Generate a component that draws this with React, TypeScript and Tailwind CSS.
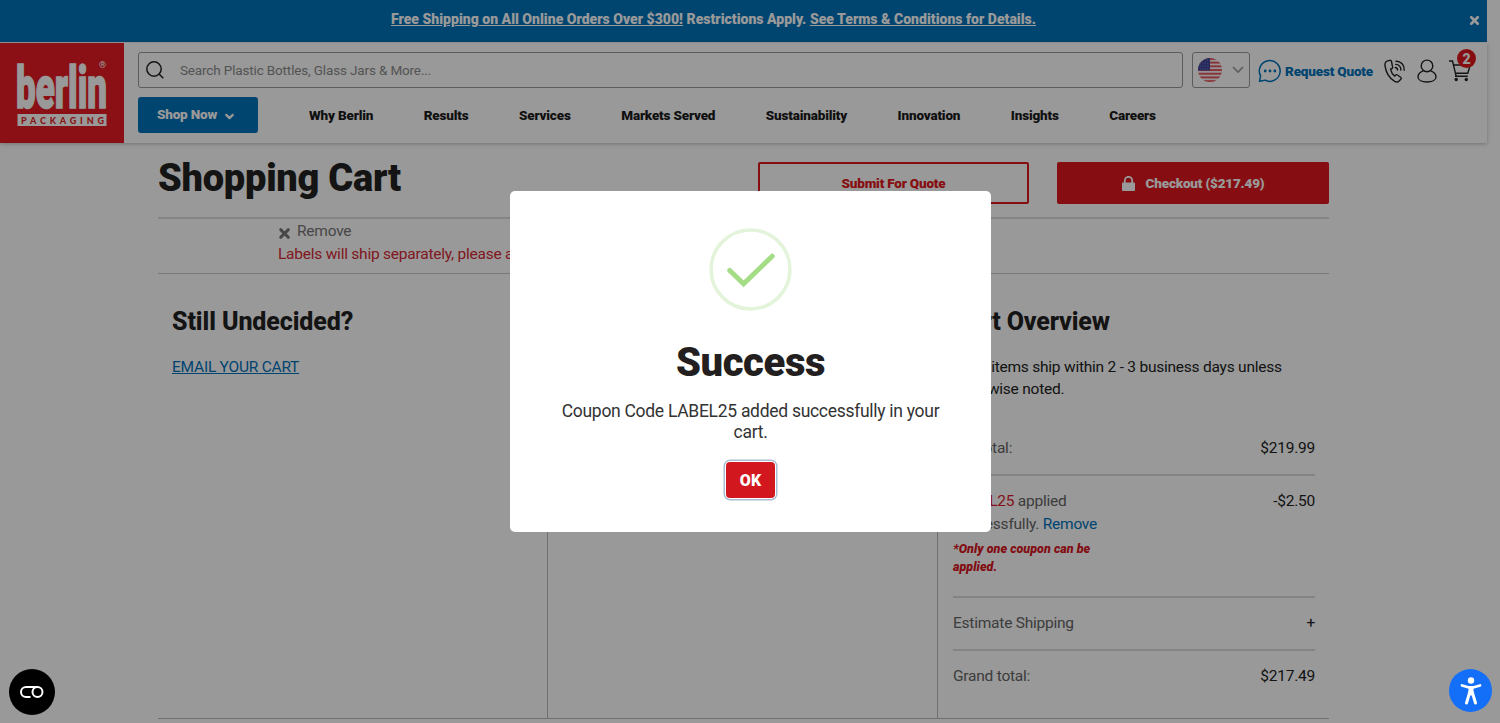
import { X, ChevronDown } from "lucide-react";

const navItems = [
  "Why Berlin",
  "Results",
  "Services",
  "Markets Served",
  "Sustainability",
  "Innovation",
  "Insights",
  "Careers",
];

function Logo() {
  return (
    <svg width="124" height="100" viewBox="0 0 124 100" className="shrink-0 overflow-visible bg-[#e61c24]">
      <text
        x="16"
        y="64.5"
        textLength="91"
        lengthAdjust="spacingAndGlyphs"
        fontFamily="Roboto, sans-serif"
        fontWeight="900"
        fontSize="60"
        fill="#fff"
        stroke="#fff"
        strokeWidth="1.5"
      >
        berlin
      </text>
      <text x="99" y="25" fontFamily="Roboto, sans-serif" fontSize="9" fill="#fff">
        ®
      </text>
      <rect x="17.5" y="71" width="89" height="12" fill="#fff" />
      <text
        x="21"
        y="80.5"
        textLength="83"
        fontFamily="Lato, sans-serif"
        fontWeight="900"
        fontSize="9"
        fill="#e61c24"
      >
        PACKAGING
      </text>
    </svg>
  );
}

function SearchIcon() {
  return (
    <svg width="18" height="18" viewBox="0 0 18 18" fill="none" stroke="#222" strokeWidth="1.5">
      <circle cx="8" cy="8" r="7.2" />
      <path d="M13 13l4.3 4.3" />
    </svg>
  );
}

function FlagIcon() {
  return (
    <svg width="24" height="24" viewBox="0 0 24 24">
      <clipPath id="flag">
        <circle cx="12" cy="12" r="12" />
      </clipPath>
      <g clipPath="url(#flag)">
        <rect width="24" height="24" fill="#f4f4f4" />
        {[0, 1, 2, 3, 4, 5, 6].map((i) => (
          <rect key={i} y={i * 3.7} width="24" height="1.85" fill="#e8505a" />
        ))}
        <rect width="12" height="12.5" fill="#41479b" />
        {[2, 5, 8, 11].map((y) => (
          <path key={y} d={`M2 ${y}h9`} stroke="#8c90c8" strokeWidth="0.8" strokeDasharray="1 1.4" />
        ))}
      </g>
    </svg>
  );
}

function ChatIcon() {
  return (
    <svg width="24" height="24" viewBox="0 0 24 24" fill="none" stroke="#0072bb" strokeWidth="1.5">
      <path d="M1.5 22.3l1.1-5.4A10.4 10.4 0 1 1 7 21.2z" strokeLinejoin="round" />
      <g fill="#0072bb" stroke="none">
        <circle cx="7.2" cy="12" r="1.4" />
        <circle cx="12" cy="12" r="1.4" />
        <circle cx="16.8" cy="12" r="1.4" />
      </g>
    </svg>
  );
}

function PhoneIcon() {
  return (
    <svg width="22" height="24" viewBox="0 0 22 24" fill="none" stroke="#222" strokeWidth="1.4" strokeLinecap="round" strokeLinejoin="round">
      <path d="M5.8 1.3L2.9 2.1C1.2 2.7.8 4.6 1 6.6c.8 6.7 4.3 12.5 9.7 15.700 1.600.9 3.200.9 4.400-.3l1.700-1.800c.6-.7.5-1.500-.2-2l-3.100-2.200c-.7-.5-1.500-.4-2 .2l-.8.9c-2.100-1.500-3.600-4.100-4.200-6.900l1.200-.5c.7-.3 1-.9.9-1.600L7.500 2.500c-.2-.8-.9-1.400-1.700-1.200z" />
      <path d="M12 2.200a8 8 0 0 1 8.200 9M11.800 5.400a5 5 0 0 1 5 5.700M11.300 8.500a2.400 2.400 0 0 1 2.200 2.500" />
    </svg>
  );
}

function UserIcon() {
  return (
    <svg width="20" height="24" viewBox="0 0 20 24" fill="none" stroke="#222" strokeWidth="1.4">
      <circle cx="10" cy="6.9" r="5.8" />
      <path d="M6.3 11.8C3 12.900 1 15.400 1 18c0 3.200 4 5 9 5s9-1.800 9-5c0-2.600-2-5.100-5.300-6.200" />
    </svg>
  );
}

function CartIcon() {
  return (
    <svg width="24" height="24" viewBox="0 0 24 24" fill="none" stroke="#222" strokeWidth="1.4">
      <path d="M1 2h3.500l3.700 15.300M5.400 6h16.800l-2.400 8.300H7.500M7 17.300h12.800" />
      <circle cx="8.2" cy="20.5" r="1.7" fill="#222" stroke="none" />
      <circle cx="18.3" cy="20.5" r="1.7" fill="#222" stroke="none" />
    </svg>
  );
}

function Header() {
  return (
    <header>
      <div className="flex h-[42px] items-center bg-[#0072bb] pr-[6px] pb-[3px] pl-[391px] text-sm font-black tracking-[0.02px] text-white">
        <p className="-mt-px whitespace-nowrap">
          <span className="underline">Free Shipping on All Online Orders Over $300!</span> Restrictions Apply.{" "}
          <span className="underline">See Terms &amp; Conditions for Details.</span>
        </p>
        <X size={13} strokeWidth={5} className="mt-[2px] ml-auto" />
      </div>
      <div className="mt-px flex h-[100px] bg-white shadow-[0_1px_4px_rgba(0,0,0,0.25)]">
        <Logo />
        <div className="ml-[14px] flex flex-1 flex-col pt-[9px]">
          <div className="flex h-9 items-center">
            <div className="flex h-9 w-[1045px] shrink-0 items-center rounded-[3px] border border-[#999] pl-[7px]">
              <SearchIcon />
              <span className="ml-[16px] text-[13.5px] tracking-[-0.15px] text-[#8c8c8c]">
                Search Plastic Bottles, Glass Jars &amp; More...
              </span>
            </div>
            <div className="ml-[9px] flex h-9 w-[58px] shrink-0 items-center rounded-[3px] border border-[#999] pl-[5px]">
              <FlagIcon />
              <svg width="12" height="8" viewBox="0 0 12 8" className="ml-[10px]" fill="none" stroke="#999" strokeWidth="1.6">
                <path d="M1 1l5 5 5-5" />
              </svg>
            </div>
            <div className="mt-[2px] ml-[8px] flex shrink-0 items-center">
              <ChatIcon />
              <span className="ml-[3px] w-[99px] text-[13.5px] font-black tracking-[-0.17px] whitespace-nowrap text-[#0072bb]">
                Request Quote
              </span>
              <PhoneIcon />
              <span className="ml-[11px]">
                <UserIcon />
              </span>
              <span className="relative ml-[11px]">
                <CartIcon />
                <span className="absolute -top-[10px] left-[9px] flex size-[19px] items-center justify-center rounded-full bg-[#e01820] text-sm font-black text-white">
                  2
                </span>
              </span>
            </div>
          </div>
          <nav className="mt-[9px] flex h-9 items-center text-[13.5px] font-black tracking-[-0.18px] text-[#1c1c1c]">
            <button className="mr-[51px] flex h-9 w-[120px] shrink-0 items-center rounded-[3px] bg-[#0072bb] pb-px pl-[19px] text-white">
              Shop Now
              <ChevronDown size={13} strokeWidth={4} className="mt-[3px] ml-[6px]" />
            </button>
            <ul className="flex gap-[50.6px] whitespace-nowrap">
              {navItems.map((item) => (
                <li key={item}>{item}</li>
              ))}
            </ul>
          </nav>
        </div>
      </div>
    </header>
  );
}

function CartOverview() {
  return (
    <section className="w-[391px] pr-[14px] pl-[15px]">
      <h2 className="mt-[31px] text-[25px] leading-[34px] font-extrabold tracking-[-0.15px]">Cart Overview</h2>
      <p className="mt-[18px] leading-[21.5px] whitespace-nowrap">
        Most items ship within 2 - 3 business days unless
        <br />
        otherwise noted.
      </p>
      <div className="mt-[24px] flex h-[52px] justify-between border-b-2 border-[#dcdcdc] pt-[12px] leading-6">
        <span className="text-[#666]">Subtotal:</span>
        <span>$219.99</span>
      </div>
      <div className="flex h-[122px] justify-between border-b-2 border-[#dcdcdc] pt-[14px]">
        <div>
          <p className="leading-[23px] text-[#666]">
            <span className="text-[#e01c2c]">LABEL25</span> applied
            <br />
            successfully. <span className="text-[#0072bb]">Remove</span>
          </p>
          <p className="mt-[4px] text-[12.5px] leading-[18px] font-black tracking-[0.03px] text-[#d9161f] italic">
            *Only one coupon can be
            <br />
            applied.
          </p>
        </div>
        <span className="leading-[23px]">-$2.50</span>
      </div>
      <div className="flex h-[53px] items-center justify-between border-b-2 border-[#dcdcdc]">
        <span className="text-[#666]">Estimate Shipping</span>
        <span>+</span>
      </div>
      <div className="flex h-[53px] items-center justify-between pb-px">
        <span className="text-[#666]">Grand total:</span>
        <span>$217.49</span>
      </div>
    </section>
  );
}

function ShoppingCart() {
  return (
    <main className="ml-[158px] w-[1171px] text-[15.5px] tracking-[-0.23px] text-[#222]">
      <div className="flex h-[76px] justify-between border-b-2 border-[#dcdcdc]">
        <h1 className="mt-[13px] text-[38px] leading-[44px] font-black tracking-[-0.25px]">Shopping Cart</h1>
        <div className="mt-[19px] flex gap-[28px] text-[13.5px] font-black tracking-[-0.18px]">
          <button className="h-[42px] w-[271px] rounded-[2px] border-2 border-[#e01820] text-[#e01820]">
            Submit For Quote
          </button>
          <button className="flex h-[42px] w-[272px] items-center justify-center gap-[11px] rounded-[2px] bg-[#e01820] text-white">
            <svg width="13" height="15" viewBox="0 0 13 15" fill="#fff">
              <path d="M0 7.5a1 1 0 0 1 1-1h11a1 1 0 0 1 1 1V14a1 1 0 0 1-1 1H1a1 1 0 0 1-1-1z" />
              <path d="M2.8 7V4.5a3.7 3.7 0 0 1 7.4 0V7" fill="none" stroke="#fff" strokeWidth="1.8" />
            </svg>
            Checkout ($217.49)
          </button>
        </div>
      </div>
      <div className="h-[55px] border-b border-[#c8c8c8] pt-[1px] pl-[120px] leading-[23px]">
        <p className="flex items-center text-[#777]">
          <X size={15} strokeWidth={5} className="mt-[4px] -ml-px mr-[5px]" />
          Remove
        </p>
        <p className="text-[#d62a35]">Labels will ship separately, please allow additional time.</p>
      </div>
      <div className="flex h-[445px] border-b border-[#bbb]">
        <section className="w-[390px] border-r border-[#bbb] pl-[14px]">
          <h2 className="mt-[31px] text-[25px] leading-[34px] font-extrabold tracking-[-0.1px]">Still Undecided?</h2>
          <p className="mt-[18px] leading-[21.5px] text-[#0072bb] underline">EMAIL YOUR CART</p>
        </section>
        <section className="w-[390px] border-r border-[#bbb]" />
        <CartOverview />
      </div>
    </main>
  );
}

function SuccessDialog() {
  return (
    <div className="flex h-[341px] w-[481px] flex-col items-center rounded-[5px] bg-white text-center">
      <svg width="83" height="83" viewBox="0 0 84 84" className="mt-[37px]" fill="none">
        <circle cx="42" cy="42" r="39.9" stroke="#e4f4db" strokeWidth="3.6" />
        <path d="M21 43L35 56.500L64 28.500" stroke="#a5dc86" strokeWidth="5" strokeLinecap="round" />
      </svg>
      <h2 className="mt-[29px] text-[40px] leading-[46px] font-black tracking-[-0.4px] text-[#231f20]">Success</h2>
      <p className="mt-[15px] w-[400px] text-[17.5px] leading-[21px] tracking-[-0.29px] text-[#333]">
        Coupon Code LABEL25 added successfully in your cart.
      </p>
      <button className="mt-[19px] h-[36px] w-[49px] rounded-[4px] bg-[#d3171e] pt-px text-base font-black text-white shadow-[0_0_0_1px_#fff,0_0_0_2.5px_#a9bdd3]">
        OK
      </button>
    </div>
  );
}

export default function App() {
  return (
    <div className="relative h-[723px] w-[1500px] overflow-hidden bg-white font-['Roboto',sans-serif]">
      <div className="w-[1487px]">
        <Header />
        <ShoppingCart />
      </div>
      <div className="absolute inset-0 flex items-start bg-black/40 pt-[191px] pl-[510px]">
        <SuccessDialog />
      </div>
      <button className="absolute top-[669px] left-[9px] flex size-[46px] items-center justify-center rounded-full bg-black">
        <svg width="24" height="12" viewBox="0 0 24 12" fill="none" stroke="#fff" strokeWidth="2">
          <path d="M10.5 11H6A5 5 0 0 1 6 1h12" />
          <circle cx="17.5" cy="6" r="5" />
        </svg>
      </button>
      <button className="absolute top-[669px] left-[1449px] flex size-[43px] items-center justify-center rounded-full bg-[#146ff8]">
        <svg width="22" height="28" viewBox="0 0 22 28" fill="none" stroke="#fff" strokeLinecap="round" strokeLinejoin="round">
          <circle cx="11" cy="3.5" r="3.2" fill="#fff" stroke="none" />
          <path d="M2 8.5l7 2h4l7-2" strokeWidth="2.8" />
          <path d="M11 12v4" strokeWidth="5" />
          <path d="M9.8 15L6.500 26M12.200 15l3.300 11" strokeWidth="3" />
        </svg>
      </button>
    </div>
  );
}
